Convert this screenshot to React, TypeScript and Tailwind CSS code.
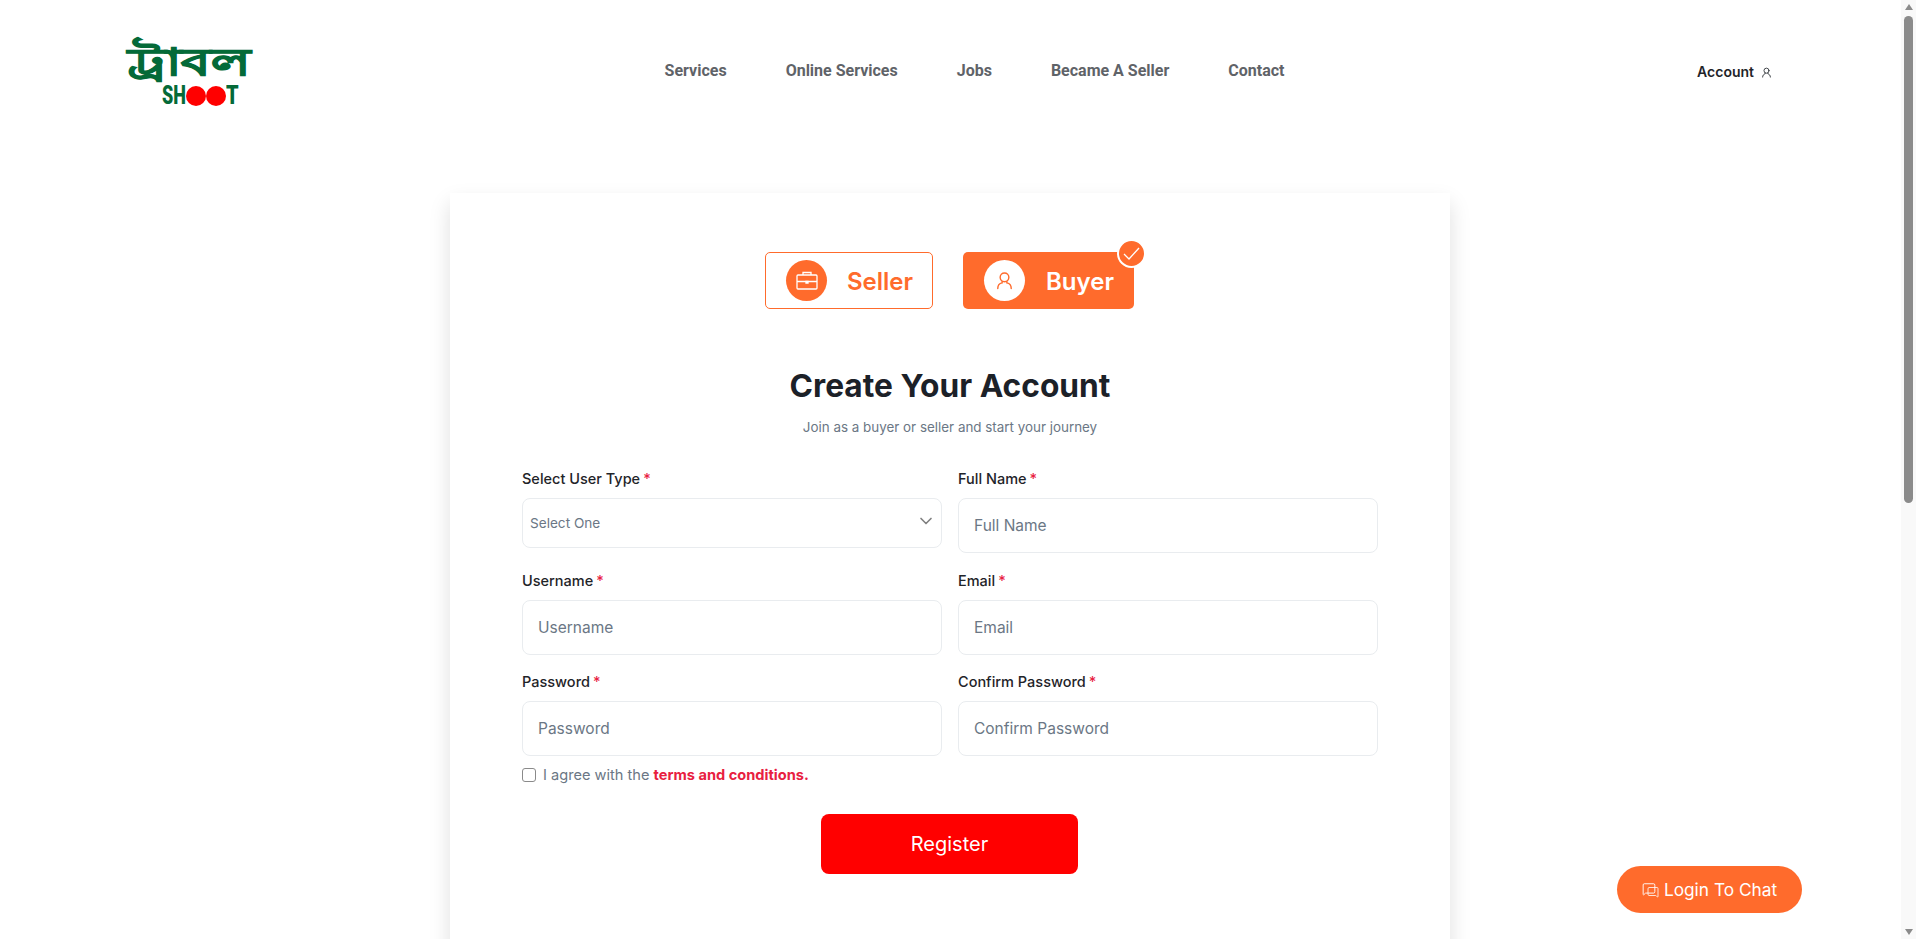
import React from 'react';
import { ChevronDown, MessageSquare } from 'lucide-react';

const navLinks = ['Services', 'Online Services', 'Jobs', 'Became A Seller', 'Contact'];

const fields = [
  { label: 'Full Name', placeholder: 'Full Name' },
  { label: 'Username', placeholder: 'Username' },
  { label: 'Email', placeholder: 'Email' },
  { label: 'Password', placeholder: 'Password' },
  { label: 'Confirm Password', placeholder: 'Confirm Password' }
];

function PersonIcon({ size, className }: { size: number; className?: string }) {
  return (
    <svg width={size} height={size} viewBox="0 0 24 24" fill="none" stroke="currentColor" strokeWidth="1.8" strokeLinecap="round" className={className}>
      <circle cx="12" cy="8" r="5.5" />
      <path d="M9 13.5v1.5c-3 .6-5.5 3-5.5 7M15 13.5v1.5c3 .6 5.5 3 5.5 7" />
    </svg>
  );
}

function CaseIcon() {
  return (
    <svg width="22" height="19" viewBox="0 0 22 19" fill="none" stroke="currentColor" strokeWidth="1.3">
      <rect x="1" y="4" width="20" height="14" rx="1" />
      <path d="M7 4V1.5h8V4M1 10.5h20" />
      <path d="M10 10.5h2v1.5h-2z" fill="currentColor" />
    </svg>
  );
}

function ChatIcon() {
  return (
    <span className="relative block w-[17px] h-[16px]">
      <MessageSquare size={14} strokeWidth={1.6} className="absolute left-0 top-0" />
      <MessageSquare size={12} strokeWidth={1.6} className="absolute right-0 bottom-0 -scale-x-100" />
    </span>
  );
}

function Logo() {
  return (
    <div className="w-[128px] h-[75px] flex flex-col items-center text-[#046a38]">
      <div className="mt-[15px] font-['Noto_Sans',sans-serif] text-[53px] leading-[36px] font-bold whitespace-nowrap scale-y-[0.72] origin-top [-webkit-text-stroke:1.5px_#046a38]">ট্রাবল</div>
      <div className="flex items-center h-[20px] ml-[22px] mt-[2px] font-['Roboto',sans-serif] text-[25px] leading-[20px] font-black">
        <span className="block w-[24px] scale-x-[0.72] origin-left">SH</span>
        <span className="w-[20px] h-[20px] rounded-full bg-[#ff0000]" />
        <span className="w-[20px] h-[20px] rounded-full bg-[#ff0000]" />
        <span className="block w-[13px] scale-x-[0.8] origin-left">T</span>
      </div>
    </div>
  );
}

function Label({ text }: { text: string }) {
  return (
    <label className="block mb-[8px] text-[14.5px] leading-[22px] font-medium text-[#1f2429]">
      {text}<span className="ml-[3px] text-[#e8203f]">*</span>
    </label>
  );
}

function Field({ label, placeholder }: { label: string; placeholder: string }) {
  return (
    <div>
      <Label text={label} />
      <input
        placeholder={placeholder}
        className="w-full h-[55px] px-[15px] bg-white border border-[#e9ecef] rounded-[8px] text-[15.5px] outline-none placeholder:text-[#6b7785]"
      />
    </div>
  );
}

export default function App() {
  return (
    <div className="flex h-[939px] overflow-hidden bg-white font-['Inter',sans-serif]">
      <div className="relative flex-1 min-w-0">
        <header className="h-[145px] pl-[125px] pr-[129px] pt-[33px] flex items-start justify-between">
          <Logo />
          <nav className="flex gap-[59px] mr-[1px] pt-[26px] font-['Roboto',sans-serif] text-[16px] leading-[24px] font-bold text-[#5f6368]">
            {navLinks.map((link) =>
              <a key={link} href="#">{link}</a>
            )}
          </nav>
          <a href="#" className="flex items-center gap-[7px] pt-[27px] text-[14px] leading-[24px] font-semibold text-[#1f2429]">
            Account <PersonIcon size={11} />
          </a>
        </header>

        <main className="w-[1000px] h-[900px] ml-[450px] mt-[48px] px-[72px] pt-[59px] bg-white shadow-[0_10px_20px_rgba(0,0,0,0.13)]">
          <div className="flex justify-center gap-[30px] pr-[1px]">
            <button className="flex items-center w-[168px] h-[57px] pl-[20px] gap-[20px] border border-[#ff6b2c] rounded-[5px] text-[24px] font-semibold text-[#ff6b2c]">
              <span className="flex items-center justify-center w-[41px] h-[41px] rounded-full bg-[#ff6b2c] text-white">
                <CaseIcon />
              </span>
              <span className="mt-[3px]">Seller</span>
            </button>
            <button className="relative flex items-center w-[171px] h-[57px] pl-[21px] gap-[21px] rounded-[5px] bg-[#ff6b2c] text-[24px] font-semibold text-white">
              <span className="flex items-center justify-center w-[41px] h-[41px] rounded-full bg-white text-[#ff6b2c]">
                <PersonIcon size={19} />
              </span>
              <span className="mt-[3px]">Buyer</span>
              <span className="absolute -top-[13px] -right-[12px] flex items-center justify-center w-[29px] h-[29px] rounded-full bg-[#ff6b2c] border-2 border-white text-white">
                <svg width="17" height="13" viewBox="0 0 17 13" fill="none" stroke="currentColor" strokeWidth="1.3">
                  <path d="M1 7l5 5L16 1" />
                </svg>
              </span>
            </button>
          </div>

          <h1 className="mt-[55px] text-center text-[31.7px] leading-[44px] font-bold text-[#1c2128]">Create Your Account</h1>
          <p className="mt-[9px] text-center text-[13.4px] leading-[20px] text-[#6b7785]">Join as a buyer or seller and start your journey</p>

          <form className="mt-[31px] w-[856px] mx-auto">
            <div className="grid grid-cols-2 gap-x-[16px] gap-y-[16.5px]">
              <div>
                <Label text="Select User Type" />
                <div className="relative flex items-center h-[50px] px-[7px] border border-[#e9ecef] rounded-[8px] text-[13.6px] text-[#6b7785]">
                  Select One
                  <ChevronDown size={20} className="absolute right-[5px] top-[12px] text-[#808080]" />
                </div>
              </div>
              {fields.map((field) =>
                <Field key={field.label} label={field.label} placeholder={field.placeholder} />
              )}
            </div>
            <label className="flex items-center gap-[7px] mt-[8px] text-[14.6px] leading-[22px] text-[#6b7785]">
              <span className="w-[14px] h-[14px] border border-[#8a8a8a] rounded-[3px] bg-white" />
              <span>I agree with the <a href="#" className="font-bold text-[#e8203f]">terms and conditions.</a></span>
            </label>
            <button type="button" className="block w-[257px] h-[60px] ml-[299px] mt-[28px] rounded-[8px] bg-[#ff0000] text-[20px] font-normal text-white">Register</button>
          </form>
        </main>

        <button className="absolute left-[1617px] top-[866px] flex items-center justify-center gap-[5px] w-[185px] h-[47px] rounded-full bg-[#ff6b2c] text-[17.3px] font-normal text-white">
          <ChatIcon />
          Login To Chat
        </button>
      </div>

      <div className="w-[15px] shrink-0 h-[939px] flex flex-col items-center bg-[#f9f9f9]">
        <div className="h-[16px] pt-[4px] flex justify-center">
          <div className="w-0 h-0 border-x-[4.5px] border-x-transparent border-b-[6px] border-b-[#8b8b8b]" />
        </div>
        <div className="w-[9px] h-[487px] bg-[#8b8b8b] rounded-full" />
        <div className="flex-1" />
        <div className="h-[16px] pb-[4px] flex items-end justify-center">
          <div className="w-0 h-0 border-x-[4.5px] border-x-transparent border-t-[6px] border-t-[#8b8b8b]" />
        </div>
      </div>
    </div>
  );
}
